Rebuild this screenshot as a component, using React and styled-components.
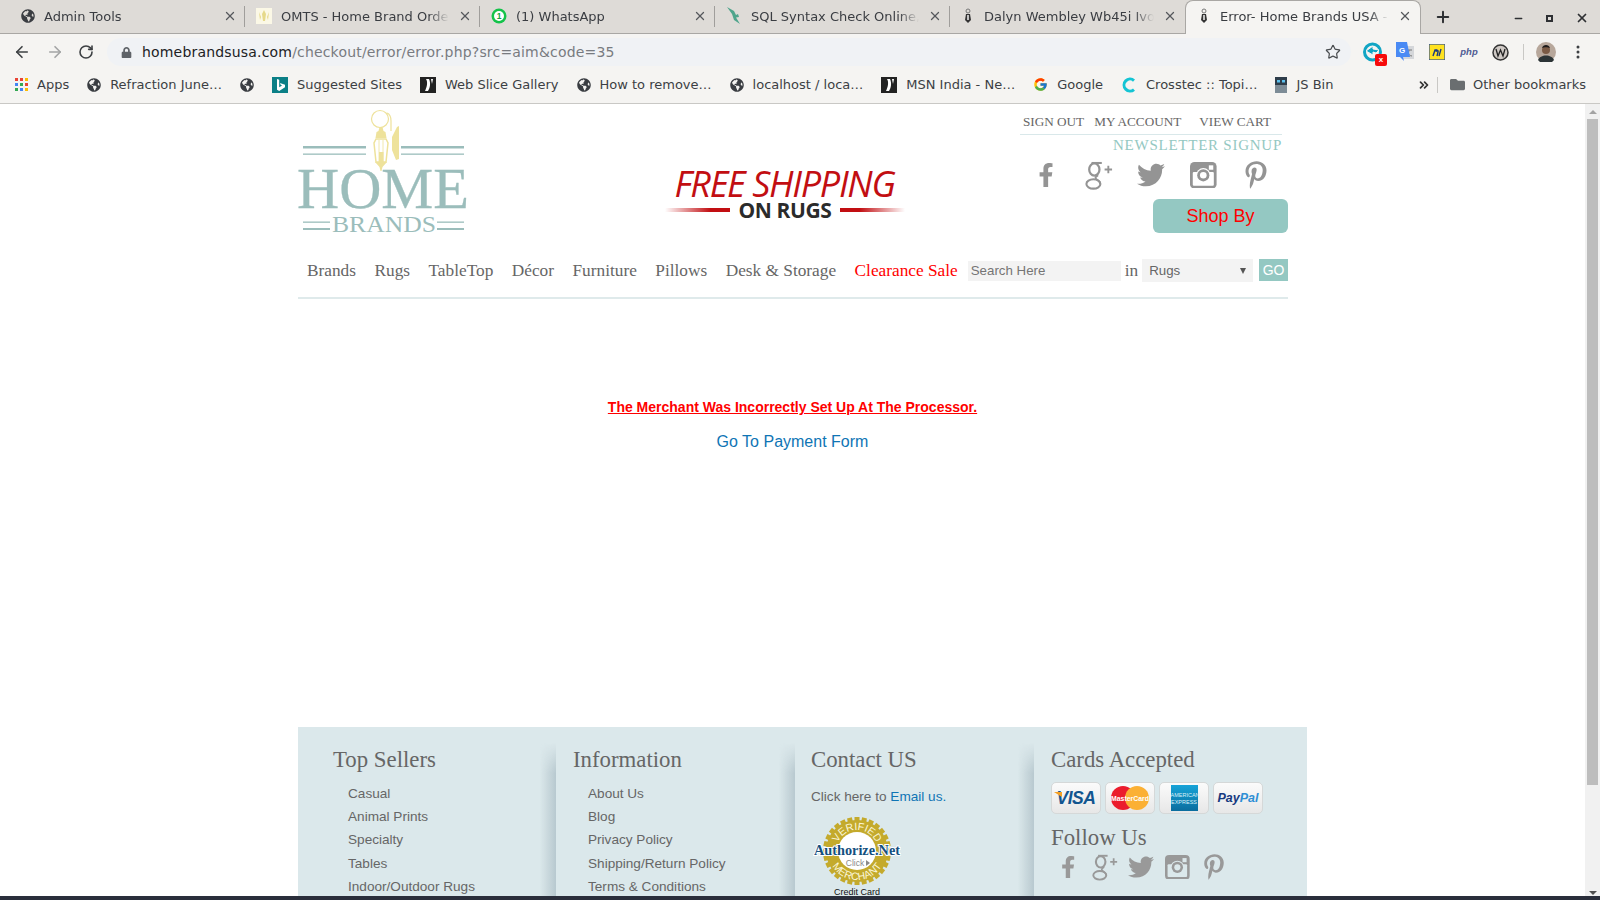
import React from 'react'
import styled, { createGlobalStyle } from 'styled-components'
import { ArrowLeft, ArrowRight, RotateCw, Star, Plus, X, Minus, ChevronsRight } from 'lucide-react'
import { FaGlobeAmericas, FaLock, FaFolder, FaFacebookF, FaTwitter, FaPinterestP } from 'react-icons/fa'
import { FcGoogle } from 'react-icons/fc'

const GlobalStyle = createGlobalStyle`
  html, body { margin: 0; padding: 0; height: 100%; overflow: hidden; background: #fff; }
  * { box-sizing: border-box; }
`

const serif = `"Liberation Serif", Georgia, serif`
const sans = `"Liberation Sans", Arial, sans-serif`
const ui = `"DejaVu Sans", sans-serif`

const Shell = styled.div`
  width: 1600px;
  height: 900px;
  display: flex;
  flex-direction: column;
  overflow: hidden;
`

const TabStrip = styled.div`
  height: 34px;
  flex: none;
  display: flex;
  align-items: flex-end;
  padding-left: 10px;
  background: #dedbd7;
  border-bottom: 1px solid #a9a7a4;
`

const Tab = styled.div`
  width: 235px;
  height: 33px;
  flex: none;
  display: flex;
  align-items: center;
  gap: 9px;
  padding: 0 8px 1px 11px;
  font: 13px ${ui};
  color: #3a3d42;
  position: relative;
  ${p => p.$active ? `
    background: #f5f4f2;
    border: 1px solid #a9a7a4;
    border-bottom: none;
    border-radius: 8px 8px 0 0;
    height: 34px;
    padding-bottom: 3px;
    margin-bottom: -1px;
    width: 236px;
  ` : ''}
  ${p => p.$divider ? `
    &::after {
      content: '';
      position: absolute;
      right: 0;
      top: 6px;
      height: 21px;
      width: 1px;
      background: #a09e9b;
    }
  ` : ''}
`

const TabTitle = styled.span`
  flex: 1;
  white-space: nowrap;
  overflow: hidden;
  -webkit-mask-image: linear-gradient(to right, #000 88%, transparent);
  mask-image: linear-gradient(to right, #000 88%, transparent);
`

const TabClose = styled(X)`
  width: 14px;
  height: 14px;
  flex: none;
  color: #55585c;
`

const NewTab = styled(Plus)`
  width: 18px;
  height: 18px;
  margin: 0 0 7px 13px;
  color: #2e3033;
  stroke-width: 2.6;
`

const WindowControls = styled.div`
  margin-left: auto;
  display: flex;
  align-items: center;
  gap: 22px;
  padding: 0 11px 8px 0;
  color: #2e3033;
`

const MaxBox = styled.span`
  width: 7px;
  height: 7px;
  border: 2px solid #2e3033;
`

const Toolbar = styled.div`
  height: 36px;
  flex: none;
  display: flex;
  align-items: center;
  background: #f5f4f2;
  padding-left: 13px;
  color: #3d4043;
`

const NavButtons = styled.div`
  display: flex;
  align-items: center;
  gap: 14.5px;
  width: 94px;
`

const Omnibox = styled.div`
  width: 1244px;
  height: 28px;
  border-radius: 14px;
  background: #f0f2f5;
  display: flex;
  align-items: center;
  padding: 0 10px 0 14px;
  font: 14px ${ui};
  letter-spacing: 0.18px;
  color: #202124;
`

const UrlPath = styled.span`
  color: #787b80;
`

const Extensions = styled.div`
  display: flex;
  align-items: center;
  padding-left: 11px;
  gap: 11px;
  flex: 1;
`

const ExtSlot = styled.div`
  width: 21px;
  height: 22px;
  position: relative;
  display: flex;
  align-items: center;
  justify-content: center;
`

const XBadge = styled.span`
  position: absolute;
  right: -4px;
  bottom: -3px;
  width: 12px;
  height: 12px;
  background: #f60b0b;
  border-radius: 2px;
  color: #fff;
  font: bold 8px/12px ${sans};
  text-align: center;
`

const ToolSep = styled.span`
  width: 1px;
  height: 16px;
  background: #c9c8c5;
  margin: 0 0 0 1px;
`

const Bookmarks = styled.div`
  height: 34px;
  flex: none;
  display: flex;
  align-items: center;
  gap: 18px;
  padding: 0 14px 4px 15px;
  background: #f5f4f2;
  border-bottom: 1px solid #c9c8c5;
  font: 13px ${ui};
  color: #3c3f44;
`

const Bookmark = styled.div`
  display: flex;
  align-items: center;
  gap: 9px;
  white-space: nowrap;
`

const BookmarksEnd = styled.div`
  margin-left: auto;
  display: flex;
  align-items: center;
  gap: 8px;
`

const BarSep = styled.span`
  width: 1px;
  height: 16px;
  background: #c9c8c5;
  margin: 0 4px 0 -2px;
`

const Viewport = styled.div`
  flex: 1;
  min-height: 0;
  display: flex;
`

const PageArea = styled.div`
  flex: 1;
  min-width: 0;
  overflow: hidden;
`

const ScrollTrack = styled.div`
  width: 15px;
  flex: none;
  background: #f1f1f1;
  display: flex;
  flex-direction: column;
  align-items: center;
  padding-top: 6px;
  position: relative;
`

const ArrowUp = styled.span`
  border-left: 4px solid transparent;
  border-right: 4px solid transparent;
  border-bottom: 4px solid #a3a3a3;
  margin-bottom: 5px;
`

const ArrowDown = styled.span`
  position: absolute;
  bottom: 1px;
  border-left: 4px solid transparent;
  border-right: 4px solid transparent;
  border-top: 4px solid #505050;
`

const Thumb = styled.div`
  width: 11px;
  height: 666px;
  background: #bdbdbd;
`

const Taskbar = styled.div`
  height: 4px;
  flex: none;
  background: #2a2e3b;
`

const Wrapper = styled.div`
  width: 990px;
  margin-left: 298px;
`

const TopRow = styled.header`
  height: 152px;
  display: flex;
`

const LogoBox = styled.div`
  width: 367px;
  padding-top: 3px;
  flex: none;
`

const Promo = styled.div`
  width: 240px;
  padding-top: 61px;
  flex: none;
  text-align: center;
`

const PromoTitle = styled.div`
  font: italic 36px/38px "Open Sans", sans-serif;
  letter-spacing: -1.3px;
  color: #c20e12;
  white-space: nowrap;
  margin-left: -1px;
`

const PromoSub = styled.div`
  display: flex;
  align-items: center;
  justify-content: center;
  gap: 9px;
  margin-top: -4px;
  font: bold 21px/22px "Open Sans", sans-serif;
  letter-spacing: -0.4px;
  color: #2b2b2b;
`

const PromoRule = styled.span`
  flex: 1;
  height: 4px;
  background: linear-gradient(${p => p.$dir}, #fff, #c20e12 70%);
`

const Account = styled.div`
  margin-left: auto;
  width: 268px;
  display: flex;
  flex-direction: column;
`

const AccountLinks = styled.div`
  margin-right: 6px;
  height: 31px;
  padding: 9px 0 0 3px;
  display: flex;
  font: 13.2px/18px ${serif};
  color: #666;
  border-bottom: 1px solid #d9e8ea;
`

const AccountLink = styled.span`
  margin-right: ${p => p.$gap}px;
  white-space: nowrap;
`

const Newsletter = styled.div`
  margin-right: 6px;
  text-align: right;
  font: 15px/20px ${serif};
  letter-spacing: 0.75px;
  color: #94c8c2;
  height: 20px;
  white-space: nowrap;
`

const TopSocial = styled.div`
  display: flex;
  align-items: center;
  height: 40px;
  color: #949494;
  font-size: 28px;
`

const TopSocialSlot = styled.span`
  width: 52.5px;
  flex: none;
  display: flex;
  justify-content: center;
`

const ShopBy = styled.button`
  align-self: flex-end;
  width: 135px;
  height: 34px;
  border: 0;
  border-radius: 6px;
  background: #94c8c2;
  color: #f00;
  font: 18px ${sans};
  margin-top: 4px;
`

const NavRow = styled.nav`
  height: 43px;
  display: flex;
  align-items: center;
  padding: 0 0 12px 9px;
  border-bottom: 2px solid #dfeaeb;
  font: 17.3px ${serif};
  color: #666;
`

const NavLink = styled.span`
  margin-right: ${p => (p.$sale ? 10 : 18.5)}px;
  white-space: nowrap;
  color: ${p => (p.$sale ? '#f00' : 'inherit')};
`

const SearchInput = styled.input`
  width: 153px;
  height: 20px;
  border: 0;
  padding: 0 3px;
  background: #f3f3f3;
  font: 13.3px ${sans};
  &::placeholder { color: #757575; opacity: 1; }
`

const InLabel = styled.span`
  margin: 0 4px;
`

const SelectBox = styled.div`
  width: 111px;
  height: 23px;
  background: #f3f3f3;
  display: flex;
  align-items: center;
  justify-content: space-between;
  padding: 0 7px;
  font: 13.3px ${sans};
  color: #666;
`

const Caret = styled.span`
  border-left: 3px solid transparent;
  border-right: 3px solid transparent;
  border-top: 6px solid #555;
`

const GoButton = styled.button`
  width: 29px;
  height: 22px;
  margin: -2px 0 0 6px;
  padding: 0;
  border: 0;
  background: #94c8c2;
  color: #fff;
  font: 14px ${sans};
`

const Message = styled.main`
  height: 428px;
  padding-top: 99px;
  text-align: center;
  font-family: ${sans};
  margin-left: -1px;
`

const ErrorText = styled.div`
  font-size: 14px;
  line-height: 18px;
  font-weight: bold;
  color: #f00;
  text-decoration: underline;
`

const PaymentLink = styled.div`
  margin-top: 16px;
  font-size: 16px;
  line-height: 20px;
  color: #0f75b5;
`

const Footer = styled.footer`
  width: 1009px;
  height: 200px;
  background: #dbe8eb;
  display: grid;
  grid-template-columns: 258px 239px 239px 1fr;
`

const FooterCol = styled.div`
  position: relative;
  padding: 19px 0 0 ${p => p.$pad}px;
  font: 13.6px ${sans};
  color: #666;
  ${p => p.$shadow ? `
    &::before {
      content: '';
      position: absolute;
      left: -16px;
      top: 16px;
      bottom: 0;
      width: 16px;
      background: linear-gradient(to right, rgba(150,170,180,0), rgba(150,170,180,0.5));
      -webkit-mask-image: linear-gradient(to bottom, transparent, #000 30px);
      mask-image: linear-gradient(to bottom, transparent, #000 30px);
    }
  ` : ''}
`

const FooterTitle = styled.h3`
  margin: 0;
  font: normal 22.8px/28px ${serif};
  color: #666;
`

const FooterList = styled.ul`
  list-style: none;
  margin: 8px 0 0;
  padding: 0 0 0 15px;
`

const FooterItem = styled.li`
  height: 23.2px;
  line-height: 23.2px;
  white-space: nowrap;
`

const ContactLine = styled.div`
  margin-top: 14px;
  line-height: 18px;
`

const MailLink = styled.span`
  color: #0f75b5;
`

const SealBox = styled.div`
  margin: 10px 0 0 2px;
  width: 88px;
  height: 71px;
`

const SealCaption = styled.div`
  width: 88px;
  font: 9px/11px ${sans};
  color: #111;
  text-align: center;
  margin-left: 2px;
`

const CardRow = styled.div`
  display: flex;
  gap: 4px;
  margin-top: 8px;
`

const PayCard = styled.div`
  width: 50px;
  height: 32px;
  border: 1px solid #d5d8d8;
  border-radius: 5px;
  background: linear-gradient(#fbfbfb, #e7e7e7);
  display: flex;
  align-items: center;
  justify-content: center;
  overflow: hidden;
`

const VisaMark = styled.span`
  position: relative;
  font: italic bold 17.5px ${sans};
  color: #12558f;
  letter-spacing: -0.5px;
  &::before {
    content: '';
    position: absolute;
    left: -3px;
    top: 4px;
    border-top: 5px solid #f4a024;
    border-left: 8px solid transparent;
  }
`

const AmexMark = styled.span`
  width: 27px;
  height: 26px;
  background: linear-gradient(#16a3d8, #0a6d9e);
  color: #d9f0f8;
  font: 5.5px/7px ${sans};
  text-align: center;
  padding-top: 7px;
`

const PayPalMark = styled.span`
  font: italic bold 12.5px ${sans};
  color: #17397f;
`

const PalPart = styled.span`
  color: #2f8fd5;
`

const FollowTitle = styled(FooterTitle)`
  margin-top: 10px;
`

const FollowIcons = styled.div`
  display: flex;
  align-items: center;
  height: 30px;
  margin-left: -1px;
  color: #999;
  font-size: 26px;
`

const FollowSlot = styled.span`
  width: 36.5px;
  flex: none;
  display: flex;
  justify-content: center;
`

const FacebookGlyph = styled(FaFacebookF)`
  font-size: 0.86em;
`

const GlobeIcon = () => <FaGlobeAmericas size={14} color="#3a3d42" style={{ flex: 'none' }} />

const MsIcon = () => (
  <svg width="16" height="16" viewBox="0 0 16 16" style={{ flex: 'none' }}>
    <rect width="16" height="16" fill="#222" />
    <path d="M6 2c2 3 1 8-1 12h3c2-3 3-8 1-12zM11 2l1 5 1-5z" fill="#fff" />
  </svg>
)

const BingIcon = () => (
  <svg width="16" height="16" viewBox="0 0 16 16" style={{ flex: 'none' }}>
    <rect width="16" height="16" fill="#0b7f86" />
    <path d="M5 2l2.2.8v7.4l3-1.6-1.4-.7-.8-2 5 1.8v2.6L7.2 14 5 12.8z" fill="#fff" />
  </svg>
)

const AppsIcon = () => (
  <svg width="13" height="13" viewBox="0 0 13 13" style={{ flex: 'none' }}>
    {['#e94335', '#e94335', '#fbbc05', '#4285f4', '#34a853', '#e94335', '#34a853', '#4285f4', '#fbbc05'].map((c, i) => (
      <rect key={i} x={(i % 3) * 5} y={Math.floor(i / 3) * 5} width="3" height="3" fill={c} />
    ))}
  </svg>
)

const LampFavicon = () => (
  <svg width="14" height="16" viewBox="0 0 14 16" style={{ flex: 'none' }}>
    <circle cx="7" cy="3" r="2" fill="none" stroke="#777" />
    <path d="M5 6h4l1 6-3 3-3-3z" fill="#333" />
    <path d="M6.3 7h1.4v5H6.3z" fill="#fff" />
  </svg>
)

const OmtsFavicon = () => (
  <svg width="16" height="16" viewBox="0 0 16 16" style={{ flex: 'none' }}>
    <rect width="16" height="16" fill="#fbf8e6" />
    <path d="M8 2l2 4-1 7H7L6 6zM3 4l2 5-1 3zM13 4l-2 5 1 3z" fill="#e6d98a" />
  </svg>
)

const WhatsAppFavicon = () => (
  <svg width="16" height="16" viewBox="0 0 16 16" style={{ flex: 'none' }}>
    <circle cx="8" cy="8" r="7.5" fill="#14c34a" />
    <circle cx="8" cy="8" r="5" fill="#fff" />
    <text x="8" y="11" fontSize="8.5" fontWeight="bold" fontFamily={sans} textAnchor="middle" fill="#14a040">1</text>
  </svg>
)

const SqlFavicon = () => (
  <svg width="16" height="18" viewBox="0 0 16 18" style={{ flex: 'none' }}>
    <path d="M1 0l7 4 2 4 2-1 1 3-3 .5 4 6.500-6-4-2-6z" fill="#4fa58c" />
  </svg>
)

const CrosstecIcon = () => (
  <svg width="16" height="16" viewBox="0 0 16 16" style={{ flex: 'none' }}>
    <path d="M13 3.5A6 6 0 1 0 13 12.5" fill="none" stroke="#14c4d4" strokeWidth="3" />
  </svg>
)

const JsBinIcon = () => (
  <svg width="12" height="16" viewBox="0 0 12 16" style={{ flex: 'none' }}>
    <rect width="12" height="16" fill="#7d8c97" />
    <rect width="12" height="8" fill="#2e3d4a" />
    <rect x="2" y="3" width="3" height="2.5" fill="#5cc0ee" />
    <rect x="7" y="3" width="3" height="2.5" fill="#5cc0ee" />
  </svg>
)

const SyncExtension = () => (
  <svg width="20" height="20" viewBox="0 0 20 20">
    <circle cx="9.5" cy="10" r="8" fill="none" stroke="#12a5c4" strokeWidth="3" />
    <path d="M3 9l7-5v3l6 1-3 3-3-1v3z" fill="#12a5c4" stroke="#f5f4f2" />
  </svg>
)

const TranslateExtension = () => (
  <svg width="18" height="20" viewBox="0 0 18 20">
    <rect x="7" y="4" width="11" height="13" fill="#d5d7da" />
    <path d="M10 8h6M13 8c0 3-2 5-3 6M11 10c1 2 3 4 5 4" fill="none" stroke="#777" />
    <path d="M0 0h11l3 15H7l1 4-4-4H0z" fill="#4a8af4" />
    <text x="6" y="11" fontSize="8" fontWeight="bold" fontFamily={sans} textAnchor="middle" fill="#fff">G</text>
  </svg>
)

const NoteExtension = () => (
  <svg width="16" height="16" viewBox="0 0 16 16">
    <rect width="16" height="16" fill="#ffe21f" stroke="#2a4f9b" strokeWidth="1.2" />
    <path d="M4 12l2-6h1.4l-.4 1.5C8 6 9.500 6 9 8l-1 4M10 12l2-7" fill="none" stroke="#1c3a80" strokeWidth="1.4" />
  </svg>
)

const PhpExtension = () => (
  <svg width="20" height="12" viewBox="0 0 20 12">
    <text x="10" y="9" fontSize="9.5" fontWeight="bold" fontStyle="italic" fontFamily={sans} textAnchor="middle" fill="#4f5b93">php</text>
  </svg>
)

const WExtension = () => (
  <svg width="17" height="17" viewBox="0 0 17 17">
    <circle cx="8.500" cy="8.500" r="7.500" fill="#cfc9c5" stroke="#333" strokeWidth="1.500" />
    <path d="M4 5l2 7 2.500-6 2.500 6 2-7" fill="none" stroke="#222" strokeWidth="1.300" />
  </svg>
)

const Avatar = () => (
  <svg width="20" height="20" viewBox="0 0 20 20">
    <circle cx="10" cy="10" r="10" fill="#b7a79b" />
    <circle cx="10" cy="8" r="4" fill="#7a5a45" />
    <path d="M6 6c1-4 7-4 8 0-2-1-6-1-8 0z" fill="#1c1a1a" />
    <path d="M2 18c2-6 14-6 16 0a10 10 0 0 1-16 0z" fill="#2c3436" />
  </svg>
)

const Kebab = () => (
  <svg width="4" height="14" viewBox="0 0 4 14">
    <circle cx="2" cy="2" r="1.500" fill="#3d4043" />
    <circle cx="2" cy="7" r="1.500" fill="#3d4043" />
    <circle cx="2" cy="12" r="1.500" fill="#3d4043" />
  </svg>
)

const GooglePlusGlyph = () => (
  <svg width="1em" height="1.08em" viewBox="0 0 30 32" fill="none" stroke="currentColor">
    <ellipse cx="10" cy="10" rx="5.5" ry="6.5" strokeWidth="2.4" />
    <path d="M7 3h11" strokeWidth="2.2" />
    <path d="M14 16c-3 2-4 3-1 5s4 3 3 5" strokeWidth="2" />
    <ellipse cx="9" cy="25.500" rx="7.500" ry="5" strokeWidth="2.2" />
    <path d="M21 10h8M25 6v8" strokeWidth="2" />
  </svg>
)

const InstagramGlyph = ({ hole }) => (
  <svg width="0.95em" height="0.95em" viewBox="0 0 24 24">
    <rect width="24" height="24" rx="4" fill="currentColor" />
    <rect x="2.500" y="9" width="19" height="12.500" rx="1" fill={hole} />
    <circle cx="12" cy="12" r="6.500" fill={hole} />
    <circle cx="12" cy="12" r="5.500" fill="currentColor" />
    <circle cx="12" cy="12" r="3" fill={hole} />
    <rect x="17" y="3" width="4" height="4" fill={hole} />
  </svg>
)

// logo is a drawing of a lantern with the name set in real text
const Logo = () => (
  <svg width="172" height="128" viewBox="0 0 172 128">
    <g fill="#9bbdbb">
      <rect x="5" y="39" width="63" height="2.500" />
      <rect x="5" y="46.500" width="63" height="1.300" />
      <rect x="103" y="39" width="63" height="2.500" />
      <rect x="103" y="46.500" width="63" height="1.300" />
      <rect x="5" y="114.500" width="27" height="1.300" />
      <rect x="5" y="121" width="27" height="2" />
      <rect x="139" y="114.500" width="27" height="1.300" />
      <rect x="139" y="121" width="27" height="2" />
    </g>
    <g fill="none" stroke="#eee29b">
      <circle cx="82" cy="12" r="8.500" strokeWidth="1.200" />
      <path d="M89 6c3 1 4 4 4 8v10" strokeWidth="1.200" />
      <path d="M78 32h10l2 4-2 19H78l-2-19z" strokeWidth="1.500" />
      <path d="M81 33v22M85 33v22" strokeWidth="0.800" />
    </g>
    <g fill="#eee29b">
      <path d="M81.500 20h3l1 4 2 1 1 6H77.500l1-6 2-1zM77 55h12l-4.500 5-1 4h-1l-1-4z" />
      <rect x="81" y="45" width="4.500" height="10" />
      <path d="M94 30l5-10 2-1v33l-3 1-4-10z" />
    </g>
    <text x="85" y="101" textAnchor="middle" textLength="172" lengthAdjust="spacingAndGlyphs" fontFamily={serif} fontSize="57" fill="#9bbdbb" stroke="#9bbdbb" strokeWidth="0.300">HOME</text>
    <text x="86" y="125" textAnchor="middle" textLength="104" lengthAdjust="spacingAndGlyphs" fontFamily={serif} fontSize="22.700" fill="#9bbdbb">BRANDS</text>
  </svg>
)

const AuthorizeSeal = () => {
  const teeth = Array.from({ length: 28 }, (_, i) => (i * 360) / 28)
  return (
    <svg width="88" height="71" viewBox="0 0 88 71">
      <defs>
        <path id="sealTop" d="M23 35a21 21 0 0 1 42 0" />
        <path id="sealBottom" d="M15 35a29 29 0 0 0 58 0" />
      </defs>
      {teeth.map(a => (
        <rect key={a} x="41.500" y="1" width="5" height="5" fill="#c4aa2c" transform={`rotate(${a} 44 35)`} />
      ))}
      <circle cx="44" cy="35" r="31" fill="#c4aa2c" />
      <circle cx="44" cy="35" r="19" fill="#fff" />
      <text fontSize="10.500" fontFamily={sans} fill="#fbf6d8">
        <textPath href="#sealTop" startOffset="50%" textAnchor="middle">VERIFIED</textPath>
      </text>
      <text fontSize="10.500" fontFamily={sans} fill="#fbf6d8">
        <textPath href="#sealBottom" startOffset="50%" textAnchor="middle">MERCHANT</textPath>
      </text>
      <text
        x="44"
        y="39"
        textAnchor="middle"
        textLength="86"
        lengthAdjust="spacingAndGlyphs"
        fontFamily={serif}
        fontWeight="bold"
        fontSize="15.500"
        fill="#14507f"
        stroke="#fff"
        strokeWidth="2"
        paintOrder="stroke"
      >
        Authorize.Net
      </text>
      <text x="42" y="50" textAnchor="middle" fontFamily={sans} fontSize="8.500" fill="#8a8a8a">Click</text>
      <path d="M53 44l4 3-4 3z" fill="#8a8a8a" />
    </svg>
  )
}

const MasterMark = () => (
  <svg width="42" height="26" viewBox="0 0 42 26">
    <circle cx="14" cy="13" r="12" fill="#eb1c2d" />
    <circle cx="28" cy="13" r="12" fill="#fbb034" />
    <text x="21" y="15.500" textAnchor="middle" textLength="38" lengthAdjust="spacingAndGlyphs" fontFamily={sans} fontSize="7" fontWeight="bold" fill="#fff">MasterCard</text>
  </svg>
)

const tabs = [
  { title: 'Admin Tools', icon: <GlobeIcon />, divider: true },
  { title: 'OMTS - Home Brand Order Man', icon: <OmtsFavicon />, divider: true },
  { title: '(1) WhatsApp', icon: <WhatsAppFavicon />, divider: true },
  { title: 'SQL Syntax Check Online, SQL', icon: <SqlFavicon />, divider: true },
  { title: 'Dalyn Wembley Wb45i Ivory Rug', icon: <LampFavicon /> },
  { title: 'Error- Home Brands USA - Rugs', icon: <LampFavicon />, active: true },
]

const bookmarks = [
  { icon: <AppsIcon />, label: 'Apps' },
  { icon: <GlobeIcon />, label: 'Refraction June…' },
  { icon: <GlobeIcon /> },
  { icon: <BingIcon />, label: 'Suggested Sites' },
  { icon: <MsIcon />, label: 'Web Slice Gallery' },
  { icon: <GlobeIcon />, label: 'How to remove…' },
  { icon: <GlobeIcon />, label: 'localhost / loca…' },
  { icon: <MsIcon />, label: 'MSN India - Ne…' },
  { icon: <FcGoogle size={15} />, label: 'Google' },
  { icon: <CrosstecIcon />, label: 'Crosstec :: Topi…' },
  { icon: <JsBinIcon />, label: 'JS Bin' },
]

const navLinks = ['Brands', 'Rugs', 'TableTop', 'Décor', 'Furniture', 'Pillows', 'Desk & Storage']

const socialIcons = hole => [
  <FacebookGlyph />,
  <GooglePlusGlyph />,
  <FaTwitter />,
  <InstagramGlyph hole={hole} />,
  <FaPinterestP />,
]

const footerLists = [
  { title: 'Top Sellers', pad: 35, items: ['Casual', 'Animal Prints', 'Specialty', 'Tables', 'Indoor/Outdoor Rugs'] },
  { title: 'Information', pad: 17, shadow: true, items: ['About Us', 'Blog', 'Privacy Policy', 'Shipping/Return Policy', 'Terms & Conditions'] },
]

function App() {
  return (
    <Shell>
      <GlobalStyle />
      <TabStrip>
        {tabs.map(tab => (
          <Tab key={tab.title} $active={tab.active} $divider={tab.divider}>
            {tab.icon}
            <TabTitle>{tab.title}</TabTitle>
            <TabClose strokeWidth={2.2} />
          </Tab>
        ))}
        <NewTab />
        <WindowControls>
          <Minus size={11} strokeWidth={3} />
          <MaxBox />
          <X size={14} strokeWidth={3} />
        </WindowControls>
      </TabStrip>

      <Toolbar>
        <NavButtons>
          <ArrowLeft size={18} strokeWidth={2.2} />
          <ArrowRight size={18} strokeWidth={2.2} color="#a3a4a5" />
          <RotateCw size={16} strokeWidth={2.4} />
        </NavButtons>
        <Omnibox>
          <FaLock size={11} color="#5f6368" style={{ marginRight: 10 }} />
          homebrandsusa.com<UrlPath>/checkout/error/error.php?src=aim&amp;code=35</UrlPath>
          <Star size={16} strokeWidth={1.8} color="#4a4d50" style={{ marginLeft: 'auto' }} />
        </Omnibox>
        <Extensions>
          <ExtSlot><SyncExtension /><XBadge>x</XBadge></ExtSlot>
          <ExtSlot><TranslateExtension /></ExtSlot>
          <ExtSlot><NoteExtension /></ExtSlot>
          <ExtSlot><PhpExtension /></ExtSlot>
          <ExtSlot><WExtension /></ExtSlot>
          <ToolSep />
          <ExtSlot><Avatar /></ExtSlot>
          <ExtSlot><Kebab /></ExtSlot>
        </Extensions>
      </Toolbar>

      <Bookmarks>
        {bookmarks.map((b, i) => (
          <Bookmark key={i}>
            {b.icon}
            {b.label}
          </Bookmark>
        ))}
        <BookmarksEnd>
          <ChevronsRight size={14} strokeWidth={3} color="#333" />
          <BarSep />
          <FaFolder size={15} color="#6a6e70" />
          Other bookmarks
        </BookmarksEnd>
      </Bookmarks>

      <Viewport>
        <PageArea>
          <Wrapper>
            <TopRow>
              <LogoBox><Logo /></LogoBox>
              <Promo>
                <PromoTitle>FREE SHIPPING</PromoTitle>
                <PromoSub>
                  <PromoRule $dir="to right" />
                  ON RUGS
                  <PromoRule $dir="to left" />
                </PromoSub>
              </Promo>
              <Account>
                <AccountLinks>
                  <AccountLink $gap={10}>SIGN OUT</AccountLink>
                  <AccountLink $gap={18}>MY ACCOUNT</AccountLink>
                  <AccountLink $gap={0}>VIEW CART</AccountLink>
                </AccountLinks>
                <Newsletter>NEWSLETTER SIGNUP</Newsletter>
                <TopSocial>
                  {socialIcons('#fff').map((icon, i) => (
                    <TopSocialSlot key={i}>{icon}</TopSocialSlot>
                  ))}
                </TopSocial>
                <ShopBy>Shop By</ShopBy>
              </Account>
            </TopRow>

            <NavRow>
              {navLinks.map(link => <NavLink key={link}>{link}</NavLink>)}
              <NavLink $sale>Clearance Sale</NavLink>
              <SearchInput placeholder="Search Here" />
              <InLabel>in</InLabel>
              <SelectBox>Rugs<Caret /></SelectBox>
              <GoButton>GO</GoButton>
            </NavRow>

            <Message>
              <ErrorText>The Merchant Was Incorrectly Set Up At The Processor.</ErrorText>
              <PaymentLink>Go To Payment Form</PaymentLink>
            </Message>

            <Footer>
              {footerLists.map(col => (
                <FooterCol key={col.title} $pad={col.pad} $shadow={col.shadow}>
                  <FooterTitle>{col.title}</FooterTitle>
                  <FooterList>
                    {col.items.map(item => <FooterItem key={item}>{item}</FooterItem>)}
                  </FooterList>
                </FooterCol>
              ))}
              <FooterCol $pad={16} $shadow>
                <FooterTitle>Contact US</FooterTitle>
                <ContactLine>Click here to <MailLink>Email us.</MailLink></ContactLine>
                <SealBox><AuthorizeSeal /></SealBox>
                <SealCaption>Credit Card</SealCaption>
              </FooterCol>
              <FooterCol $pad={17} $shadow>
                <FooterTitle>Cards Accepted</FooterTitle>
                <CardRow>
                  <PayCard><VisaMark>VISA</VisaMark></PayCard>
                  <PayCard><MasterMark /></PayCard>
                  <PayCard><AmexMark>AMERICAN EXPRESS</AmexMark></PayCard>
                  <PayCard><PayPalMark>Pay<PalPart>Pal</PalPart></PayPalMark></PayCard>
                </CardRow>
                <FollowTitle>Follow Us</FollowTitle>
                <FollowIcons>
                  {socialIcons('#dbe8eb').map((icon, i) => (
                    <FollowSlot key={i}>{icon}</FollowSlot>
                  ))}
                </FollowIcons>
              </FooterCol>
            </Footer>
          </Wrapper>
        </PageArea>
        <ScrollTrack>
          <ArrowUp />
          <Thumb />
          <ArrowDown />
        </ScrollTrack>
      </Viewport>
      <Taskbar />
    </Shell>
  )
}

export default App
